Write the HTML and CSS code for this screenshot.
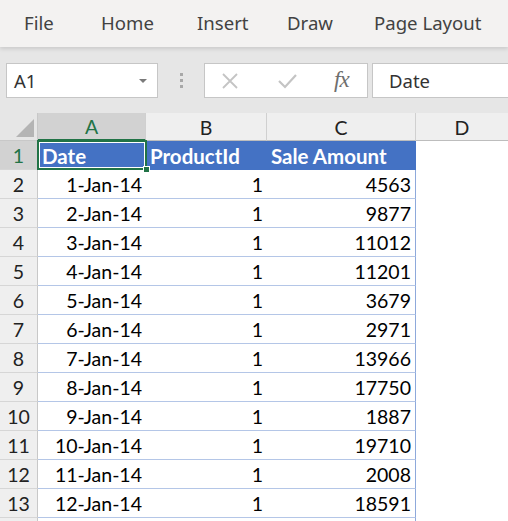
FILE: index.html
```html
<!DOCTYPE html>
<html>
<head>
<meta charset="utf-8">
<link rel="stylesheet" href="styles.css">
</head>
<body>
<div class="ribbon">
  <span class="tab t-file">File</span>
  <span class="tab t-home">Home</span>
  <span class="tab t-insert">Insert</span>
  <span class="tab t-draw">Draw</span>
  <span class="tab t-page">Page Layout</span>
</div>
<div class="fbar">
  <div class="namebox"><span>A1</span><svg class="dd" width="10" height="6" viewBox="0 0 10 6"><path d="M1 1 L5 5 L9 1 Z" fill="#7a7a7a"/></svg></div>
  <div class="dots"><i></i><i></i><i></i></div>
  <div class="btns">
    <svg width="20" height="20" viewBox="0 0 20 20"><path d="M3 3 L17 17 M17 3 L3 17" stroke="#c4c4c4" stroke-width="1.8" fill="none"/></svg>
    <svg width="22" height="20" viewBox="0 0 22 20"><path d="M3 10 L9 16 L20 4" stroke="#c4c4c4" stroke-width="2.2" fill="none"/></svg>
    <span class="fx">fx</span>
  </div>
  <div class="finput">Date</div>
</div>
<div class="sheet">
  <div class="corner"><span class="tri"></span></div>
  <div class="ch sel">A</div>
  <div class="ch">B</div>
  <div class="ch">C</div>
  <div class="ch last">D</div>

  <div class="rh sel">1</div>
  <div class="c hd first"><span>Date</span><span class="selbox"><span class="handle"></span></span></div>
  <div class="c hd">ProductId</div>
  <div class="c hd tr">Sale Amount</div>
  <div class="c e"></div>
</div>
<div class="sheet body" id="rows"></div>
<script src="app.js"></script>
</body>
</html>
```
FILE: app.js
```js
var data = [
  ["1-Jan-14",1,4563],["2-Jan-14",1,9877],["3-Jan-14",1,11012],["4-Jan-14",1,11201],
  ["5-Jan-14",1,3679],["6-Jan-14",1,2971],["7-Jan-14",1,13966],["8-Jan-14",1,17750],
  ["9-Jan-14",1,1887],["10-Jan-14",1,19710],["11-Jan-14",1,2008],["12-Jan-14",1,18591]
];
var el = document.getElementById('rows');
var h = '';
data.forEach(function (r, i) {
  h += '<div class="rh">' + (i + 2) + '</div>' +
       '<div class="c r">' + r[0] + '</div>' +
       '<div class="c r">' + r[1] + '</div>' +
       '<div class="c r tr">' + r[2] + '</div>' +
       '<div class="c e"></div>';
});
h += '<div class="rh"></div><div class="c"></div><div class="c"></div><div class="c tr"></div><div class="c e"></div>';
el.innerHTML = h;
```
FILE: styles.css
```css
* { box-sizing: border-box; }
html, body { margin: 0; padding: 0; background: #fff; overflow: hidden; }
body { width: 508px; height: 521px; font-family: "Lato", "Liberation Sans", sans-serif; }

.ribbon {
  height: 47px;
  background: #f3f2f1;
  display: flex;
  align-items: center;
  font-family: "Noto Sans", "Open Sans", sans-serif;
  font-size: 18.6px;
  color: #424242;
  position: relative;
  z-index: 2;
  box-shadow: 0 2px 4px rgba(0,0,0,0.12);
  padding-bottom: 2px;
  padding-left: 24px;
}
.tab { white-space: nowrap; flex: none; }
.t-file { width: 77px; }
.t-home { width: 96px; }
.t-insert { width: 90px; }
.t-draw { width: 87px; }

.fbar {
  height: 66px;
  background: #e6e6e6;
  display: flex;
  align-items: flex-start;
  padding-top: 16px;
}
.namebox {
  margin-left: 6px;
  width: 152px;
  height: 35px;
  background: #fff;
  border: 1px solid #c6c6c6;
  display: flex;
  align-items: center;
  justify-content: space-between;
  padding: 0 9px 0 7px;
  font-family: "Noto Sans", sans-serif;
  font-size: 18.5px;
  color: #333;
}
.dd { margin-top: 1px; }
.dots {
  width: 46px;
  height: 35px;
  display: flex;
  flex-direction: column;
  align-items: center;
  justify-content: center;
  gap: 3px;
}
.dots i { display: block; width: 3px; height: 3px; background: #a8a8a8; }
.btns {
  width: 164px;
  height: 35px;
  background: #fff;
  border: 1px solid #c6c6c6;
  display: flex;
  align-items: center;
  padding-left: 15px;
  gap: 36px;
}
.fx {
  font-family: "Liberation Serif", serif;
  font-style: italic;
  font-size: 23px;
  color: #6e6e6e;
  letter-spacing: -1px;
  margin-top: -2px;
}
.finput {
  margin-left: 4px;
  flex: 1;
  height: 35px;
  background: #fff;
  border: 1px solid #c6c6c6;
  border-right: none;
  display: flex;
  align-items: center;
  padding-left: 16px;
  font-family: "Noto Sans", sans-serif;
  font-size: 18.5px;
  color: #333;
}

.sheet {
  display: grid;
  grid-template-columns: 38px 108px 121px 149px 92px;
  grid-template-rows: 28px 29px;
}
.sheet.body { grid-template-rows: repeat(13, 29px); }

.corner {
  background: #e6e6e6;
  border-right: 1px solid #c8c8c8;
  border-bottom: 1px solid #c8c8c8;
  position: relative;
}
.tri {
  position: absolute;
  right: 3px;
  bottom: 3px;
  width: 0; height: 0;
  border-left: 18px solid transparent;
  border-bottom: 18px solid #b4b4b4;
}
.ch {
  background: #efefef;
  border-right: 1px solid #d0d0d0;
  border-bottom: 1px solid #bdbdbd;
  display: flex;
  align-items: center;
  justify-content: center;
  font-size: 19.5px;
  color: #222;
  padding-top: 1px;
}
.ch.sel { background: #d2d2d2; color: #217346; border-bottom: 2px solid #217346; }
.ch.last { border-right: none; }

.rh {
  background: #efefef;
  border-right: 1px solid #c8c8c8;
  border-bottom: 1px solid #d6d6d6;
  display: flex;
  align-items: center;
  justify-content: center;
  font-size: 19.5px;
  color: #222;
  padding-top: 1px;
}
.rh.sel { background: #d2d2d2; color: #217346; }

.c {
  border-bottom: 1px solid #b4c6e7;
  display: flex;
  align-items: center;
  font-size: 19.5px;
  color: #000;
  padding: 1px 4px 0 4px;
  white-space: nowrap;
}
.c.tr { border-right: 1px solid #8ea9db; }
.c.e { border-bottom: none; }
.c.r { justify-content: flex-end; }
.hd {
  background: #4472c4;
  color: #fff;
  font-weight: bold;
  font-size: 20.5px;
  border-bottom: 1px solid #4472c4;
}
.hd.tr { border-right: 1px solid #4472c4; }
.first { position: relative; }
.selbox {
  position: absolute;
  left: -1px; top: -1px; right: -1px; bottom: -1px;
  border: 2px solid #217346;
  box-shadow: inset 0 0 0 1px #fff;
}
.handle {
  position: absolute;
  right: -5px; bottom: -5px;
  width: 7px; height: 7px;
  background: #217346;
  border: 1px solid #fff;
}
```
